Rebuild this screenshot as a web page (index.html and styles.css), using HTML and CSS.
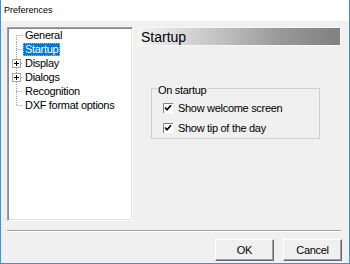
FILE: index.html
```html
<!DOCTYPE html>
<html lang="en">
<head>
  <meta charset="UTF-8" />
  <title>Preferences</title>
  <link rel="stylesheet" href="styles.css">
</head>
<body>
  <div class="window">
    <div class="titlebar">Preferences</div>
    <div class="main">
      <div class="tree">
        <div class="row">
          <svg class="branch" width="14" height="14"><path d="M7.5 7V14M7.5 7.5H14" /></svg>
          <span class="label">General</span>
        </div>
        <div class="row">
          <svg class="branch" width="14" height="14"><path d="M7.5 0V14M7.5 7.5H14" /></svg>
          <span class="label selected">Startup</span>
        </div>
        <div class="row">
          <svg class="branch" width="14" height="14"><path d="M7.5 0V3M7.5 12V14M12 7.5H14" /><rect class="box" x="3.5" y="3.5" width="8" height="8"/><path class="plus" d="M5 7.5H10M7.5 5V10"/></svg>
          <span class="label">Display</span>
        </div>
        <div class="row">
          <svg class="branch" width="14" height="14"><path d="M7.5 0V3M7.5 12V14M12 7.5H14" /><rect class="box" x="3.5" y="3.5" width="8" height="8"/><path class="plus" d="M5 7.5H10M7.5 5V10"/></svg>
          <span class="label">Dialogs</span>
        </div>
        <div class="row">
          <svg class="branch" width="14" height="14"><path d="M7.5 0V14M7.5 7.5H14" /></svg>
          <span class="label">Recognition</span>
        </div>
        <div class="row">
          <svg class="branch" width="14" height="14"><path d="M7.5 0V8M7.5 7.5H14" /></svg>
          <span class="label">DXF format options</span>
        </div>
      </div>
      <div class="page">
        <div class="page-header">Startup</div>
        <div class="group">
          <span class="group-label">On startup</span>
          <div class="check-row">
            <svg class="check" width="10" height="10"><rect x="0" y="0" width="10" height="10" fill="#fff"/><path d="M0.5 10V0.5H10" stroke="#808080" fill="none"/><path d="M2 4.5L4 6.8L8 2.2" stroke="#000" stroke-width="1.6" fill="none"/></svg>
            <span>Show welcome screen</span>
          </div>
          <div class="check-row">
            <svg class="check" width="10" height="10"><rect x="0" y="0" width="10" height="10" fill="#fff"/><path d="M0.5 10V0.5H10" stroke="#808080" fill="none"/><path d="M2 4.5L4 6.8L8 2.2" stroke="#000" stroke-width="1.6" fill="none"/></svg>
            <span>Show tip of the day</span>
          </div>
        </div>
      </div>
    </div>
    <div class="separator"></div>
    <div class="buttons">
      <button type="button">OK</button>
      <button type="button">Cancel</button>
    </div>
  </div>
</body>
</html>
```

FILE: styles.css
```css
body {
  margin: 0;
  font-family: "Liberation Sans", Arial, sans-serif;
  font-size: 11px;
  letter-spacing: -0.3px;
  color: #000;
}
.window {
  width: 350px;
  height: 264px;
  box-sizing: border-box;
  border: 1px solid #3d94dc;
  border-top: none;
  background: #f0f0f0;
}
.titlebar {
  height: 21px;
  line-height: 20px;
  padding-left: 3px;
  background: #fff;
  font-size: 9px;
  letter-spacing: 0;
}
.main {
  display: flex;
  padding: 6px 8px 0 6px;
}
.tree {
  width: 126px;
  height: 194px;
  box-sizing: border-box;
  background: #fff;
  border-top: 1px solid #a0a0a0;
  border-left: 1px solid #a0a0a0;
  border-right: 1px solid #fff;
  border-bottom: 1px solid #fff;
  box-shadow: inset 1px 1px 0 #8a8a8a, inset -1px -1px 0 #e3e3e3;
  padding: 0 0 0 1px;
}
.row {
  display: flex;
  align-items: center;
  height: 14px;
}
.branch {
  flex: none;
}
.branch path {
  stroke: #a0a0a0;
  stroke-dasharray: 1 1;
  fill: none;
}
.branch .box {
  fill: #fff;
  stroke: #a8a8a8;
}
.branch .plus {
  stroke: #000;
  stroke-dasharray: none;
}
.label {
  padding: 0 2px;
  line-height: 13px;
  white-space: nowrap;
}
.selected {
  background: #0078d7;
  color: #fff;
  outline: 1px dotted #e9a35c;
  outline-offset: -1px;
}
.page {
  flex: 1;
  margin-left: 5px;
}
.page-header {
  height: 19px;
  box-sizing: border-box;
  line-height: 18px;
  padding-left: 2px;
  font-size: 14px;
  letter-spacing: 0;
  border: 1px solid #f8f8f8;
  background: linear-gradient(to right, #f2f2f2, #c8c8c8 35%, #999 70%, #808080);
}
.group {
  display: flex;
  flex-direction: column;
  align-items: flex-start;
  width: 169px;
  height: 51px;
  box-sizing: border-box;
  margin: 42px 0 0 13px;
  border: 1px solid #cfcfcf;
}
.group-label {
  margin: -5px 0 1px 5px;
  padding: 0 1px;
  line-height: 13px;
  background: #f0f0f0;
}
.check-row {
  display: flex;
  align-items: center;
  gap: 5px;
  height: 20px;
  padding-left: 11px;
}
.check {
  flex: none;
}
.separator {
  margin: 9px 8px 0 6px;
  border-top: 1px solid #a0a0a0;
  border-bottom: 1px solid #fff;
}
.buttons {
  display: flex;
  justify-content: flex-end;
  gap: 9px;
  margin-top: 7px;
  padding-right: 7px;
}
button {
  width: 59px;
  height: 22px;
  padding: 0;
  font-family: "Liberation Sans", Arial, sans-serif;
  font-size: 11px;
  letter-spacing: -0.3px;
  color: #000;
  background: #f0f0f0;
  border-top: 1px solid #fff;
  border-left: 1px solid #fff;
  border-right: 1px solid #696969;
  border-bottom: 1px solid #696969;
  box-shadow: inset -1px -1px 0 #a0a0a0;
}
```
